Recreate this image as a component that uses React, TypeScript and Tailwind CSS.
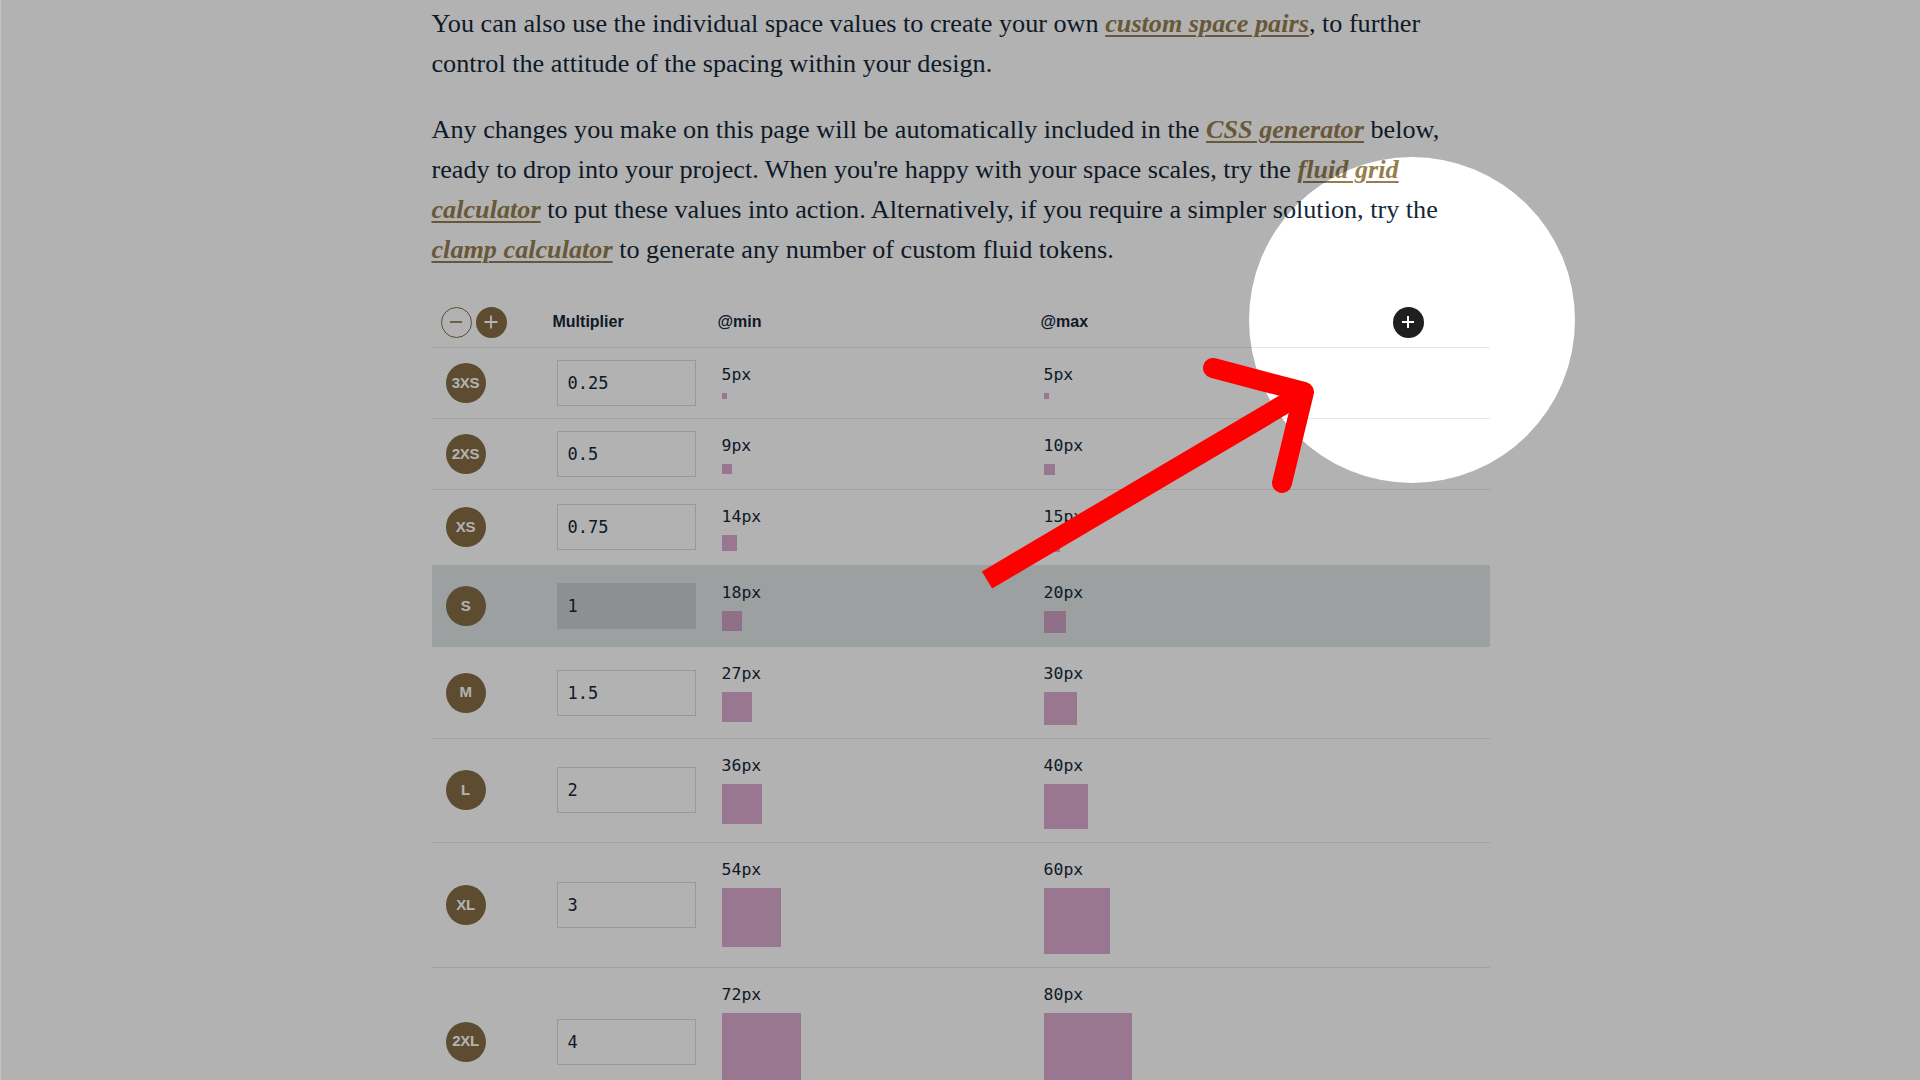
import React from 'react';

const serif = "font-['Liberation_Serif','Times_New_Roman',serif]";
const sans = "font-['Liberation_Sans',Arial,sans-serif]";
const mono = "font-['DejaVu_Sans_Mono','Liberation_Mono',monospace]";
const link = "italic font-semibold text-[#967e4f] underline decoration-2 underline-offset-[3px]";

type Row = { label: string; mult: string; min: number; max: number; active?: boolean };

const rows: Row[] = [
  { label: '3XS', mult: '0.25', min: 5, max: 5 },
  { label: '2XS', mult: '0.5', min: 9, max: 10 },
  { label: 'XS', mult: '0.75', min: 14, max: 15 },
  { label: 'S', mult: '1', min: 18, max: 20, active: true },
  { label: 'M', mult: '1.5', min: 27, max: 30 },
  { label: 'L', mult: '2', min: 36, max: 40 },
  { label: 'XL', mult: '3', min: 54, max: 60 },
  { label: '2XL', mult: '4', min: 72, max: 80 },
];

// squares on the page render ~11% larger than their labels
const box = (px: number) => Math.round(px * 1.11 * 10) / 10;

const Swatch: React.FC<{ px: number; active?: boolean }> = ({ px, active }) => (
  <div className="self-start pt-[17px] pb-[13px]">
    <div className={`${mono} text-[16.5px] leading-[20px] text-[#152839]`}>{px}px</div>
    <div
      className={active ? 'mt-[8px] bg-[rgba(193,103,168,0.55)]' : 'mt-[8px] bg-[#ddabcf]'}
      style={{ width: box(px), height: box(px) }}
    />
  </div>
);

const SpaceRow: React.FC<{ row: Row }> = ({ row }) => (
  <div
    className={`grid grid-cols-[125px_165px_322px_1fr_97px] items-center min-h-[71px] border-b ${
      row.active ? 'bg-[#e0e6e6] border-transparent' : 'border-[#e6e7e7]'
    }`}
  >
    <div className="pl-[14px]">
      <div className={`${sans} flex h-[40px] w-[40px] items-center justify-center rounded-full bg-[#866e45] text-[15px] font-bold tracking-[-0.3px] text-white`}>
        {row.label}
      </div>
    </div>
    <div>
      <input
        readOnly
        value={row.mult}
        className={`${mono} block h-[46px] w-[139px] border px-[10px] text-[17px] text-[#152839] outline-none ${
          row.active ? 'bg-[#c9cfd2] border-[#c9cfd2]' : 'bg-white border-[#dcdcdc]'
        }`}
      />
    </div>
    <Swatch px={row.min} active={row.active} />
    <Swatch px={row.max} active={row.active} />
    <div />
  </div>
);

const App: React.FC = () => {
  return (
    <div className="relative h-[1080px] overflow-hidden border-l border-[#c2c2c2] bg-white">
      <main className="mx-auto w-[1058px] pt-[4px]">
        <div className={`${serif} text-[26.2px] leading-[40px] text-[#152839] whitespace-nowrap`}>
          <p>
            You can also use the individual space values to create your own{' '}
            <a className={link}>custom space pairs</a>, to further
            <br />
            control the attitude of the spacing within your design.
          </p>
          <p className="mt-[26px]">
            Any changes you make on this page will be automatically included in the{' '}
            <a className={link}>CSS generator</a> below,
            <br />
            ready to drop into your project. When you're happy with your space scales, try the{' '}
            <a className={link}>fluid grid</a>
            <br />
            <a className={link}>calculator</a> to put these values into action. Alternatively, if you require a simpler solution, try the
            <br />
            <a className={link}>clamp calculator</a> to generate any number of custom fluid tokens.
          </p>
        </div>

        <div className="mt-[27px]">
          <div className={`${sans} grid h-[51px] grid-cols-[121px_165px_323px_1fr_97px] items-center border-b border-[#e6e7e7] text-[16px] font-bold text-[#152839]`}>
            <div className="flex items-center gap-[4px] pl-[9px]">
              <button className="flex h-[31px] w-[31px] items-center justify-center rounded-full border-[1.5px] border-[#866e45]">
                <svg width="16" height="16" viewBox="0 0 16 16">
                  <path d="M2 8h12" stroke="#866e45" strokeWidth="1.6" />
                </svg>
              </button>
              <button className="flex h-[31px] w-[31px] items-center justify-center rounded-full bg-[#866e45]">
                <svg width="16" height="16" viewBox="0 0 16 16">
                  <path d="M1.5 8h13M8 1.5v13" stroke="#ffffff" strokeWidth="1.8" />
                </svg>
              </button>
            </div>
            <div>Multiplier</div>
            <div>@min</div>
            <div>@max</div>
            <div>
              <button className="flex h-[31px] w-[31px] items-center justify-center rounded-full bg-[#1f1f1f]">
                <svg width="14" height="14" viewBox="0 0 14 14">
                  <path d="M1 7h12M7 1v12" stroke="#ffffff" strokeWidth="2" />
                </svg>
              </button>
            </div>
          </div>

          {rows.map((r) => (
            <SpaceRow key={r.label} row={r} />
          ))}
        </div>
      </main>

      {/* spotlight: dims everything except the circle */}
      <div className="pointer-events-none absolute left-[1248px] top-[157px] h-[326px] w-[326px] rounded-full shadow-[0_0_0_2600px_rgba(0,0,0,0.3)]" />

      {/* annotation arrow */}
      <svg className="pointer-events-none absolute left-0 top-0" width="1920" height="1080" viewBox="0 0 1920 1080">
        <line x1="986" y1="580" x2="1299" y2="395" stroke="#ff0000" strokeWidth="20" strokeLinecap="butt" />
        <polyline
          points="1212,368 1303,392 1281,483"
          fill="none"
          stroke="#ff0000"
          strokeWidth="20"
          strokeLinecap="round"
          strokeLinejoin="round"
        />
      </svg>
    </div>
  );
};

export default App;
